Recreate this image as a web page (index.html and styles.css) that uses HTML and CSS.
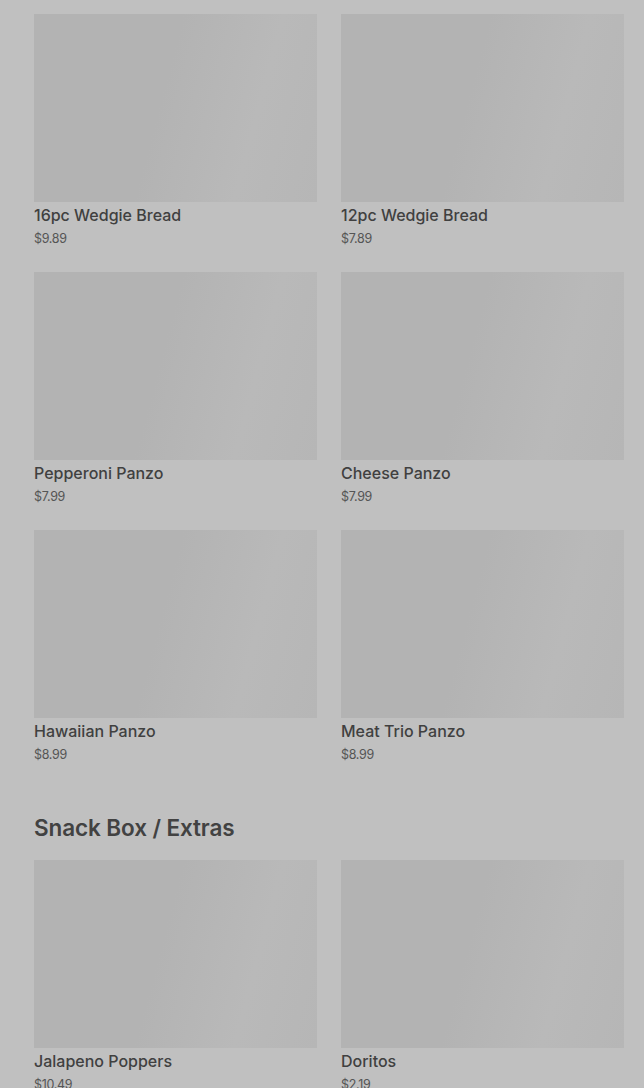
FILE: index.html
```html
<!DOCTYPE html>
<html lang="en">
<head>
    <meta charset="UTF-8">
    <meta name="viewport" content="width=device-width, initial-scale=1.0">
    <title>Menu</title>
    <link rel="stylesheet" href="styles.css">
</head>
<body>
    <main class="menu">
        <section class="menu-section">
            <div class="item-grid">
                <div class="item-card">
                    <div class="item-image"></div>
                    <div class="item-name">16pc Wedgie Bread</div>
                    <div class="item-price">$9.89</div>
                </div>
                <div class="item-card">
                    <div class="item-image"></div>
                    <div class="item-name">12pc Wedgie Bread</div>
                    <div class="item-price">$7.89</div>
                </div>
                <div class="item-card">
                    <div class="item-image"></div>
                    <div class="item-name">Pepperoni Panzo</div>
                    <div class="item-price">$7.99</div>
                </div>
                <div class="item-card">
                    <div class="item-image"></div>
                    <div class="item-name">Cheese Panzo</div>
                    <div class="item-price">$7.99</div>
                </div>
                <div class="item-card">
                    <div class="item-image"></div>
                    <div class="item-name">Hawaiian Panzo</div>
                    <div class="item-price">$8.99</div>
                </div>
                <div class="item-card">
                    <div class="item-image"></div>
                    <div class="item-name">Meat Trio Panzo</div>
                    <div class="item-price">$8.99</div>
                </div>
            </div>
        </section>
        <section class="menu-section">
            <h2 class="section-title">Snack Box / Extras</h2>
            <div class="item-grid">
                <div class="item-card">
                    <div class="item-image"></div>
                    <div class="item-name">Jalapeno Poppers</div>
                    <div class="item-price">$10.49</div>
                </div>
                <div class="item-card">
                    <div class="item-image"></div>
                    <div class="item-name">Doritos</div>
                    <div class="item-price">$2.19</div>
                </div>
            </div>
        </section>
    </main>
</body>
</html>
```

FILE: styles.css
```css
/* General Styles */
body {
    font-family: 'Inter', 'Roboto', sans-serif;
    margin: 0;
    padding: 0;
    background-color: #c0c0c0;
    color: #414141;
    overflow: hidden;
}

.menu {
    padding: 14px 20px 0 34px;
}

/* Sections */
.section-title {
    margin: 50px 0 18px;
    font-size: 22.5px;
    line-height: 28px;
    font-weight: 600;
    letter-spacing: -0.1px;
    color: #424242;
}

.item-grid {
    display: grid;
    grid-template-columns: 1fr 1fr;
    column-gap: 24px;
    row-gap: 24px;
}

/* Item cards */
.item-image {
    height: 188px;
    background: linear-gradient(105deg, #b3b3b3 0%, #b3b3b3 45%, #b9b9b9 75%, #b6b6b6 100%);
}

.item-name {
    margin-top: 1px;
    font-size: 16px;
    line-height: 24px;
    font-weight: 500;
    color: #404040;
}

.item-price {
    padding-top: 2px;
    font-size: 12.5px;
    line-height: 19px;
    color: #555555;
    letter-spacing: -0.3px;
}
```
